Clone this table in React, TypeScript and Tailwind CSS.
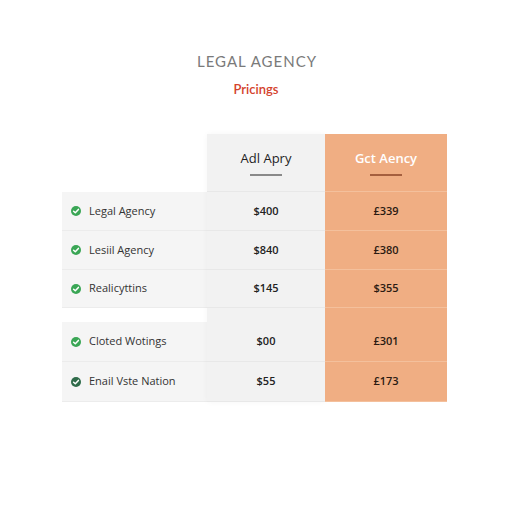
import React from 'react';

const ROWS = [
  { label: 'Legal Agency', a: '$400', b: '£339', h: 'h-[39px]', dark: false },
  { label: 'Lesiil Agency', a: '$840', b: '£380', h: 'h-[39px]', dark: false },
  { label: 'Realicyttins', a: '$145', b: '$355', h: 'h-[38px]', dark: false },
];
const ROWS2 = [
  { label: 'Cloted Wotings', a: '$00', b: '£301', h: 'h-[40px]', dark: false },
  { label: 'Enail Vste Nation', a: '$55', b: '£173', h: 'h-[40px]', dark: true },
];

const Check: React.FC<{ dark?: boolean }> = ({ dark }) => (
  <svg width="10" height="10" viewBox="0 0 10 10">
    <circle cx="5" cy="5" r="5" fill={dark ? '#2f6b4a' : '#3aa655'} />
    <path d="M2.6 5.2 L4.3 6.8 L7.4 3.4" stroke="#fff" strokeWidth="1.5" fill="none" strokeLinecap="round" strokeLinejoin="round" />
  </svg>
);

const App: React.FC = () => {
  return (
    <div className="w-[512px] h-[512px] bg-white flex flex-col items-center" style={{ fontFamily: '"Open Sans", Lato, sans-serif' }}>
      <h1 className="mt-[53px] ml-[2px] text-[15px] leading-[16px] tracking-[1px] text-[#7a7a7a] font-normal" style={{ fontFamily: 'Lato, sans-serif' }}>LEGAL AGENCY</h1>
      <p className="mt-[12px] text-[13px] leading-[16px] font-semibold text-[#d4422c]" style={{ fontFamily: 'Lato, sans-serif' }}>Pricings</p>

      <div className="mt-[37px] ml-[-3px] flex">
        {/* labels */}
        <div className="w-[145px] flex flex-col">
          <div className="h-[58px]" />
          {ROWS.map(r => (
            <div key={r.label} className={`${r.h} bg-[#f5f5f5] border-b border-[#ececec] flex items-center gap-[8px] pl-[9px] text-[11px] text-[#333]`}>
              <Check dark={r.dark} />
              <span>{r.label}</span>
            </div>
          ))}
          <div className="h-[14px]" />
          {ROWS2.map(r => (
            <div key={r.label} className={`${r.h} bg-[#f5f5f5] border-b border-[#ececec] flex items-center gap-[8px] pl-[9px] text-[11px] text-[#333]`}>
              <Check dark={r.dark} />
              <span>{r.label}</span>
            </div>
          ))}
        </div>

        {/* middle plan */}
        <div className="w-[118px] flex flex-col bg-[#f2f2f2] shadow-[0_0_6px_rgba(0,0,0,0.04)]">
          <div className="h-[58px] flex flex-col items-center justify-end pb-[15px] border-b border-[#e8e8e8]">
            <span className="text-[13px] leading-[16px] text-[#1e1e1e]">Adl Apry</span>
            <span className="mt-[8px] w-[32px] h-[2px] bg-[#8a8a8a]" />
          </div>
          {ROWS.map(r => (
            <div key={r.label} className={`${r.h} border-b border-[#e8e8e8] flex items-center justify-center text-[11px] font-semibold text-[#222]`}>{r.a}</div>
          ))}
          <div className="h-[14px]" />
          {ROWS2.map(r => (
            <div key={r.label} className={`${r.h} border-b border-[#e8e8e8] flex items-center justify-center text-[11px] font-semibold text-[#222]`}>{r.a}</div>
          ))}
        </div>

        {/* highlighted plan */}
        <div className="w-[122px] flex flex-col bg-[#f0ae83]">
          <div className="h-[58px] flex flex-col items-center justify-end pb-[15px] border-b border-[#f4c09c]">
            <span className="text-[13px] leading-[16px] text-white font-semibold">Gct Aency</span>
            <span className="mt-[8px] w-[32px] h-[2px] bg-[#a55f3e]" />
          </div>
          {ROWS.map(r => (
            <div key={r.label} className={`${r.h} border-b border-[#f4c09c] flex items-center justify-center text-[11px] font-semibold text-[#2a1a12]`}>{r.b}</div>
          ))}
          <div className="h-[14px]" />
          {ROWS2.map(r => (
            <div key={r.label} className={`${r.h} border-b border-[#f4c09c] flex items-center justify-center text-[11px] font-semibold text-[#2a1a12]`}>{r.b}</div>
          ))}
        </div>
      </div>
    </div>
  );
};

export default App;
